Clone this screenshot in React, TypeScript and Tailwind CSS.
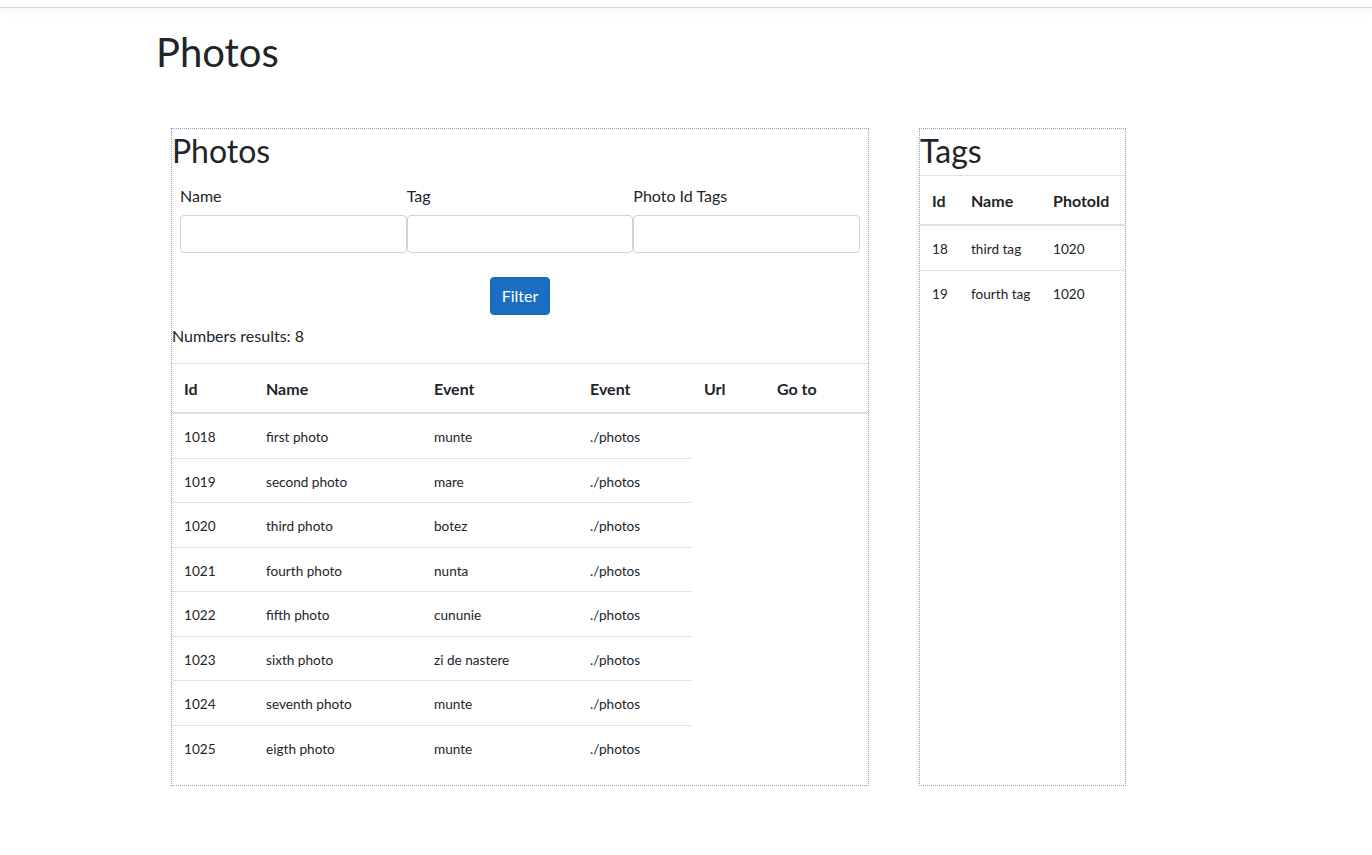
import React from "react";

const photos = [
  ["1018", "first photo", "munte"],
  ["1019", "second photo", "mare"],
  ["1020", "third photo", "botez"],
  ["1021", "fourth photo", "nunta"],
  ["1022", "fifth photo", "cununie"],
  ["1023", "sixth photo", "zi de nastere"],
  ["1024", "seventh photo", "munte"],
  ["1025", "eigth photo", "munte"],
];

const tags = [
  ["18", "third tag", "1020"],
  ["19", "fourth tag", "1020"],
];

export default function App() {
  return (
    <div
      className="min-h-[855px] bg-white text-[#212529]"
      style={{ fontFamily: 'Lato, "Noto Sans", sans-serif' }}
    >
      <div className="h-[8px] border-b border-[#d6d5d5] shadow-[0_3px_10px_rgba(0,0,0,0.05)]" />
      <div className="pl-[156px]">
        <h1 className="text-[40px] leading-[1.2] font-normal mt-[20px] mb-[52px]">Photos</h1>
      </div>
      <div className="flex items-stretch pl-[171px] gap-[50px]">
        <div className="w-[698px] border border-dotted border-[#8aa4c8]">
          <h2 className="text-[32px] leading-[1.2] font-normal pt-[3px] mb-[14px]">Photos</h2>
          <div className="grid grid-cols-3 px-2">
            {["Name", "Tag", "Photo Id Tags"].map((l) => (
              <div key={l} className="flex flex-col">
                <label className="text-[16px] leading-6 mb-[7px]">{l}</label>
                <input className="h-[38px] border border-[#ced4da] rounded-[4px] outline-none" />
              </div>
            ))}
          </div>
          <div className="flex justify-center mt-[24px]">
            <button className="h-[38px] w-[60px] bg-[#1b6ec2] border border-[#1861ac] rounded-[4px] text-white text-[16px] leading-6">
              Filter
            </button>
          </div>
          <p className="text-[16px] leading-6 mt-[9px] mb-[15px]">Numbers results: 8</p>
          <table className="w-full table-fixed border-collapse mb-[16px]">
            <colgroup>
              <col className="w-[82px]" />
              <col className="w-[168px]" />
              <col className="w-[156px]" />
              <col className="w-[114px]" />
              <col className="w-[73px]" />
              <col className="w-[103px]" />
            </colgroup>
            <thead>
              <tr>
                {["Id", "Name", "Event", "Event", "Url", "Go to"].map((h, i) => (
                  <th
                    key={i}
                    className="text-left font-bold text-[16px] leading-6 px-3 pt-[13px] pb-[11px] border-t border-[#dee2e6] border-b-2 border-b-[#dee2e6] whitespace-nowrap"
                  >
                    {h}
                  </th>
                ))}
              </tr>
            </thead>
            <tbody>
              {photos.map((r, i) => (
                <tr key={i}>
                  {[r[0], r[1], r[2], "./photos"].map((c, j) => (
                    <td
                      key={j}
                      className={`text-[13.6px] leading-[19.5px] px-3 pt-[14px] pb-[10px] whitespace-nowrap ${i > 0 ? "border-t border-[#dee2e6]" : ""}`}
                    >
                      {c}
                    </td>
                  ))}
                </tr>
              ))}
            </tbody>
          </table>
        </div>
        <div className="w-[207px] border border-dotted border-[#8aa4c8]">
          <h2 className="text-[32px] leading-[1.2] font-normal pt-[3px] mb-[5px]">Tags</h2>
          <table className="w-full table-fixed border-collapse">
            <colgroup>
              <col className="w-[39px]" />
              <col className="w-[82px]" />
              <col className="w-[84px]" />
            </colgroup>
            <thead>
              <tr>
                {["Id", "Name", "PhotoId"].map((h, i) => (
                  <th
                    key={i}
                    className={`text-left font-bold text-[16px] leading-6 pt-[13px] pb-[11px] whitespace-nowrap ${i === 0 ? "pl-3 pr-0" : "px-3"} border-t border-[#dee2e6] border-b-2 border-b-[#dee2e6]`}
                  >
                    {h}
                  </th>
                ))}
              </tr>
            </thead>
            <tbody>
              {tags.map((r, i) => (
                <tr key={i}>
                  {r.map((c, j) => (
                    <td
                      key={j}
                      className={`text-[13.6px] leading-[19.5px] pt-[14px] pb-[10px] whitespace-nowrap ${j === 0 ? "pl-3 pr-0" : "px-3"} ${i > 0 ? "border-t border-[#dee2e6]" : ""}`}
                    >
                      {c}
                    </td>
                  ))}
                </tr>
              ))}
            </tbody>
          </table>
        </div>
      </div>
    </div>
  );
}
